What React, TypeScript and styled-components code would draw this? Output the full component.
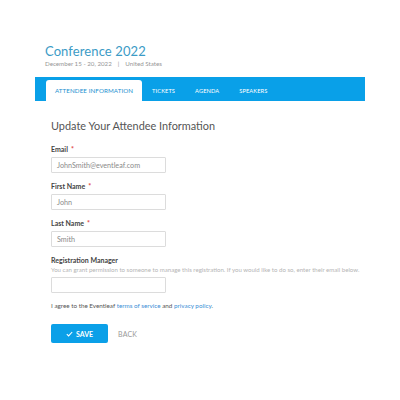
import React from "react";
import styled, { createGlobalStyle } from "styled-components";

const Global = createGlobalStyle`
  html, body { margin: 0; padding: 0; background: #ffffff; }
  body { font-family: Lato, "Open Sans", sans-serif; }
`;

const Page = styled.div`
  width: 400px;
  height: 400px;
  box-sizing: border-box;
  padding: 44px 35px 0 35px;
`;

const Header = styled.header`
  padding-left: 10px;
  display: flex;
  flex-direction: column;
`;

const Title = styled.h1`
  margin: 0;
  font-size: 13px;
  font-weight: 400;
  color: #3b9bc6;
  line-height: 15px;
  letter-spacing: 0.1px;
`;

const Sub = styled.div`
  margin-top: 0;
  font-size: 6.2px;
  color: #959595;
  line-height: 9px;
  display: flex;
  gap: 6px;
`;

const TabBar = styled.nav`
  margin-top: 9px;
  height: 24px;
  background: #09a0e8;
  display: flex;
  align-items: flex-end;
  padding-left: 11px;
  box-sizing: border-box;
`;

const Tab = styled.div<{ $active?: boolean }>`
  height: ${(p) => (p.$active ? "21px" : "24px")};
  padding: ${(p) => (p.$active ? "0 9px 0 9px" : "3px 10px 0 10px")};
  display: flex;
  align-items: center;
  font-size: ${(p) => (p.$active ? "6.2px" : "5.7px")};
  font-weight: 400;
  color: ${(p) => (p.$active ? "#1a8fd0" : "#ffffff")};
  background: ${(p) => (p.$active ? "#ffffff" : "transparent")};
  border-radius: ${(p) => (p.$active ? "3px 3px 0 0" : "0")};
  text-transform: uppercase;
  letter-spacing: 0.1px;
  box-sizing: border-box;
`;

const Form = styled.form`
  padding: 18px 0 0 16px;
  display: flex;
  flex-direction: column;
`;

const Heading = styled.h2`
  margin: 0 0 11px 0;
  font-size: 10.9px;
  font-weight: 400;
  color: #555555;
  line-height: 14px;
`;

const Field = styled.div`
  display: flex;
  flex-direction: column;
  margin-bottom: 8px;
`;

const Label = styled.label`
  font-size: 7px;
  font-weight: 700;
  color: #444444;
  line-height: 10px;
  margin-bottom: 3px;
`;

const Star = styled.span`
  color: #e0443e;
  margin-left: 3px;
`;

const Help = styled.div`
  font-size: 6.1px;
  color: #b5b5b5;
  line-height: 9px;
  margin: -3px 0 3px 0;
  white-space: nowrap;
`;

const Input = styled.div`
  width: 115px;
  height: 16px;
  box-sizing: border-box;
  border: 1px solid #dcdcdc;
  border-radius: 1px;
  padding-left: 5px;
  display: flex;
  align-items: center;
  font-size: 7.2px;
  color: #8a8a8a;
`;

const Agree = styled.p`
  margin: 0 0 14px 0;
  font-size: 6.3px;
  color: #555555;
  line-height: 9px;
`;

const Link = styled.a`
  color: #3c8fd6;
  text-decoration: none;
`;

const Actions = styled.div`
  display: flex;
  align-items: center;
  gap: 10px;
`;

const SaveButton = styled.button`
  width: 57px;
  height: 19px;
  background: #0ba0e8;
  border: none;
  border-radius: 2px;
  color: #ffffff;
  font-family: inherit;
  font-size: 7px;
  font-weight: 700;
  display: flex;
  align-items: center;
  justify-content: center;
  gap: 3px;
  padding: 0;
`;

const BackButton = styled.button`
  background: none;
  border: none;
  padding: 0;
  font-family: inherit;
  font-size: 7px;
  color: #999999;
  letter-spacing: 0.2px;
`;

export default function App() {
  return (
    <>
      <Global />
      <Page>
        <Header>
          <Title>Conference 2022</Title>
          <Sub>
            <span>December 15 - 20, 2022</span>
            <span>|</span>
            <span>United States</span>
          </Sub>
        </Header>
        <TabBar>
          <Tab $active>Attendee Information</Tab>
          <Tab>Tickets</Tab>
          <Tab>Agenda</Tab>
          <Tab>Speakers</Tab>
        </TabBar>
        <Form>
          <Heading>Update Your Attendee Information</Heading>
          <Field>
            <Label>
              Email<Star>*</Star>
            </Label>
            <Input>JohnSmith@eventleaf.com</Input>
          </Field>
          <Field>
            <Label>
              First Name<Star>*</Star>
            </Label>
            <Input>John</Input>
          </Field>
          <Field>
            <Label>
              Last Name<Star>*</Star>
            </Label>
            <Input>Smith</Input>
          </Field>
          <Field>
            <Label>Registration Manager</Label>
            <Help>
              You can grant permission to someone to manage this registration. If you would like to do so, enter their email below.
            </Help>
            <Input />
          </Field>
          <Agree>
            I agree to the Eventleaf <Link>terms of service</Link> and <Link>privacy policy</Link>.
          </Agree>
          <Actions>
            <SaveButton type="button">
              <svg width="7" height="6" viewBox="0 0 7 6">
                <path d="M0.8 3.2 L2.6 4.9 L6.2 1" stroke="#fff" strokeWidth="1.1" fill="none" />
              </svg>
              SAVE
            </SaveButton>
            <BackButton type="button">BACK</BackButton>
          </Actions>
        </Form>
      </Page>
    </>
  );
}
